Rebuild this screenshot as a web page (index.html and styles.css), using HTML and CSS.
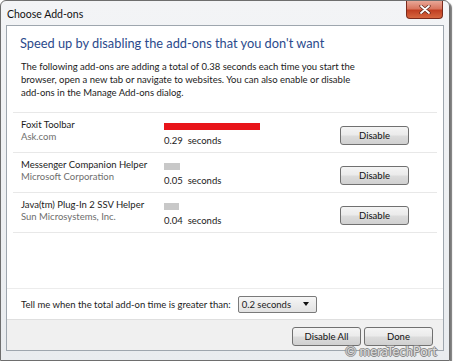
FILE: index.html
```html
<!DOCTYPE html>
<html lang="en">
<head>
  <meta charset="UTF-8">
  <title>Choose Add-ons</title>
  <link rel="stylesheet" href="styles.css">
</head>
<body>

  <div class="window">
    <div class="titlebar">
      <span class="title">Choose Add-ons</span>
      <button class="close-btn" aria-label="Close">
        <svg width="12" height="9" viewBox="0 0 12 9">
          <path d="M2 1 L10 8 M10 1 L2 8" stroke="#5a2418" stroke-width="3.2" stroke-linecap="round"/>
          <path d="M2 1 L10 8 M10 1 L2 8" stroke="#fff" stroke-width="1.8" stroke-linecap="round"/>
        </svg>
      </button>
    </div>

    <div class="panel">
      <div class="content">
        <h1 class="instruction">Speed up by disabling the add-ons that you don't want</h1>
        <p class="intro">The following add-ons are adding a total of 0.38 seconds each time you start the browser, open a new tab or navigate to websites. You can also enable or disable add-ons in the Manage Add-ons dialog.</p>

        <div class="addons" id="addon-list"></div>

        <div class="threshold">
          <span>Tell me when the total add-on time is greater than:</span>
          <div class="select">
            <span>0.2 seconds</span>
            <span class="caret"></span>
          </div>
        </div>
      </div>

      <div class="footer">
        <button class="btn">Disable All</button>
        <button class="btn">Done</button>
      </div>
    </div>

    <div class="watermark">© meraTechPort</div>
  </div>

  <script>
    // add-ons and their load time
    const addons = [
      { name: "Foxit Toolbar", company: "Ask.com", time: 0.29, bar: 96, slow: true },
      { name: "Messenger Companion Helper", company: "Microsoft Corporation", time: 0.05, bar: 16, slow: false },
      { name: "Java(tm) Plug-In 2 SSV Helper", company: "Sun Microsystems, Inc.", time: 0.04, bar: 15, slow: false }
    ];

    const list = document.getElementById("addon-list");
    addons.forEach(a => {
      list.innerHTML += `
        <div class="addon">
          <div class="addon-info">
            <div class="addon-name">${a.name}</div>
            <div class="addon-company">${a.company}</div>
          </div>
          <div class="addon-time">
            <div class="bar ${a.slow ? 'slow' : ''}" style="width: ${a.bar}px"></div>
            <div class="seconds">${a.time.toFixed(2)}&nbsp; seconds</div>
          </div>
          <button class="btn">Disable</button>
        </div>
      `;
    });
  </script>
</body>
</html>
```

FILE: styles.css
```css
body {
  margin: 0;
  background: #fff;
  font-family: 'Lato', 'Noto Sans', sans-serif;
  font-size: 9.5px;
  color: #1b1b1b;
}

.window {
  position: relative;
  width: 438px;
  height: 350px;
  padding: 0 5px 9px 5px;
  border: 1px solid #6e6e6e;
  border-radius: 6px 6px 0 0;
  background: linear-gradient(#f3f4f6, #e9ecef);
  box-shadow: 2px 2px 1px #7a7a7a;
  display: flex;
  flex-direction: column;
}

.titlebar {
  height: 24px;
  display: flex;
  align-items: flex-start;
  justify-content: space-between;
}

.title {
  margin-top: 7px;
  margin-left: 1px;
  font-size: 10.5px;
  color: #111;
}

.close-btn {
  width: 37px;
  height: 18px;
  margin-right: 1px;
  padding: 0;
  border: 1px solid #7a2a1c;
  border-top: none;
  border-radius: 0 0 4px 4px;
  background: linear-gradient(#e9a797 0%, #d9765f 45%, #c13f22 55%, #d6663f 100%);
  display: flex;
  align-items: center;
  justify-content: center;
}

.panel {
  flex: 1;
  display: flex;
  flex-direction: column;
  background: #fff;
  border: 1px solid #9ea6ae;
}

.content {
  flex: 1;
  display: flex;
  flex-direction: column;
}

.instruction {
  margin: 7px 0 0 13px;
  font-size: 12.8px;
  line-height: 20px;
  font-weight: normal;
  color: #2b4a8c;
}

.intro {
  margin: 7px 0 0 14px;
  width: 345px;
  line-height: 13px;
}

.addons {
  margin: 13px 6px 0 6px;
  border-top: 1px solid #e8e8e8;
}

.addon {
  height: 40px;
  box-sizing: border-box;
  padding: 6px 0 0 8px;
  border-bottom: 1px solid #e8e8e8;
  display: flex;
}

.addon-info {
  width: 143px;
  line-height: 12px;
}

.addon-company {
  color: #6e6e6e;
}

.addon-time {
  width: 176px;
}

.bar {
  height: 7px;
  margin-top: 4px;
  background: #c8c8c8;
}

.bar.slow {
  background: #e8141a;
}

.seconds {
  margin-top: 5px;
  line-height: 12px;
}

.btn {
  width: 69px;
  height: 19px;
  padding: 0;
  border: 1px solid #707070;
  border-radius: 3px;
  background: linear-gradient(#f4f4f4 0%, #ebebeb 48%, #dcdcdc 52%, #d0d0d0 100%);
  font-family: 'Lato', 'Noto Sans', sans-serif;
  font-size: 9.5px;
  color: #111;
}

.addon .btn {
  margin-top: 7px;
}

.threshold {
  margin-top: auto;
  height: 30px;
  padding-left: 14px;
  border-top: 1px solid #ececec;
  display: flex;
  align-items: center;
  gap: 7px;
}

.select {
  width: 71px;
  height: 15px;
  padding: 0 3px;
  border: 1px solid #7a7a7a;
  border-radius: 2px;
  background: linear-gradient(#f6f6f6, #e2e2e2);
  display: flex;
  align-items: center;
  justify-content: space-between;
}

.caret {
  width: 0;
  height: 0;
  margin-right: 4px;
  border-left: 3px solid transparent;
  border-right: 3px solid transparent;
  border-top: 4px solid #111;
}

.footer {
  height: 31px;
  padding: 7px 10px 0 0;
  box-sizing: border-box;
  background: #f0f0f0;
  border-top: 1px solid #dfdfdf;
  display: flex;
  justify-content: flex-end;
  align-items: flex-start;
  gap: 3px;
}

.watermark {
  position: absolute;
  right: 12px;
  bottom: 1px;
  font-size: 13px;
  color: #dcdcdc;
  text-shadow: -1px 0 #8a8a8a, 1px 0 #8a8a8a, 0 -1px #8a8a8a, 0 1px #8a8a8a;
}
```
